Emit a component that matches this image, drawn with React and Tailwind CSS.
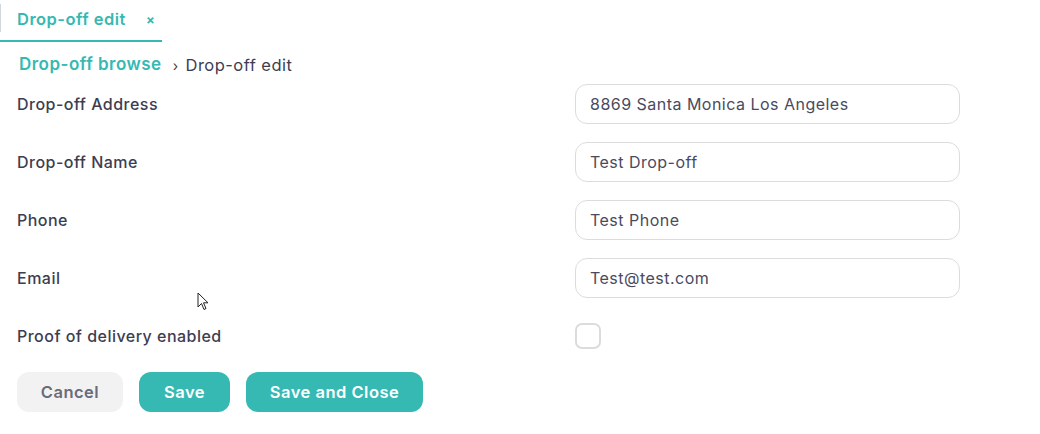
import { useState } from "react";

const fields = [
  { label: "Drop-off Address", value: "8869 Santa Monica Los Angeles" },
  { label: "Drop-off Name", value: "Test Drop-off" },
  { label: "Phone", value: "Test Phone" },
  { label: "Email", value: "Test@test.com" },
];

export default function App() {
  const [values, setValues] = useState(fields.map((f) => f.value));
  const [proof, setProof] = useState(false);

  return (
    <div className="relative h-[434px] w-[1040px] bg-white font-['Inter',sans-serif] tracking-[0.03em] text-[#3d3d52]">
      {/* tab bar */}
      <div className="flex h-[42px] items-start">
        <div className="relative mt-1 flex h-[38px] w-[162px] items-start border-b-2 border-[#36b9b2] pl-[17px] pt-[3px]">
          <div className="absolute left-0 top-0 h-[28px] w-px bg-gray-300" />
          <span className="text-[16.5px] font-semibold text-[#36b9b2]">Drop-off edit</span>
          <span className="ml-[20px] mt-[4px] text-[13px] font-bold text-[#36b9b2]">×</span>
        </div>
      </div>

      {/* breadcrumb */}
      <div className="flex h-[30px] items-center pl-[19px] pt-[16px]">
        <span className="text-[17px] font-semibold text-[#36b9b2]">Drop-off browse</span>
        <span className="ml-[11px] mr-[7px] text-[14px] text-[#3d3d52]">›</span>
        <span className="text-[16.5px] text-[#3d3d52]">Drop-off edit</span>
      </div>

      {/* form */}
      <div className="flex flex-col gap-[18px] pl-[17px] pt-[12px]">
        {fields.map((f, i) => (
          <div key={f.label} className="flex items-center">
            <label className="w-[558px] text-[16px] font-medium text-[#3d3d52]">{f.label}</label>
            <input
              value={values[i]}
              onChange={(e) => setValues(values.map((v, j) => (j === i ? e.target.value : v)))}
              className="h-[40px] w-[385px] rounded-[12px] border border-[#dcdcdc] px-[14px] text-[16px] tracking-[0.03em] text-[#4a4a5e] outline-none"
            />
          </div>
        ))}
        <div className="flex h-[40px] items-center">
          <label className="w-[558px] text-[16px] font-medium text-[#3d3d52]">Proof of delivery enabled</label>
          <button
            onClick={() => setProof(!proof)}
            className={`h-[26px] w-[26px] rounded-[7px] border-2 ${proof ? "border-[#36b9b2] bg-[#36b9b2]" : "border-[#dcdcdc] bg-white"}`}
          />
        </div>
      </div>

      {/* buttons */}
      <div className="mt-[16px] flex gap-[16px] pl-[17px]">
        <button className="h-[40px] w-[106px] rounded-[12px] bg-[#f2f2f2] text-[16.5px] font-semibold tracking-[0.03em] text-[#6b6b7b]">Cancel</button>
        <button className="h-[40px] w-[91px] rounded-[12px] bg-[#36b9b2] text-[16.5px] font-semibold tracking-[0.03em] text-white">Save</button>
        <button className="h-[40px] w-[177px] rounded-[12px] bg-[#36b9b2] text-[16.5px] font-semibold tracking-[0.03em] text-white">Save and Close</button>
      </div>

      {/* mouse cursor */}
      <svg className="absolute left-[197px] top-[292px]" width="12" height="20" viewBox="0 0 12 20">
        <path d="M1 1 L1 15 L4.5 11.5 L7 17.5 L9 16.5 L6.5 10.8 L11 10.8 Z" fill="white" stroke="#222" strokeWidth="1" strokeLinejoin="round" />
      </svg>
    </div>
  );
}
